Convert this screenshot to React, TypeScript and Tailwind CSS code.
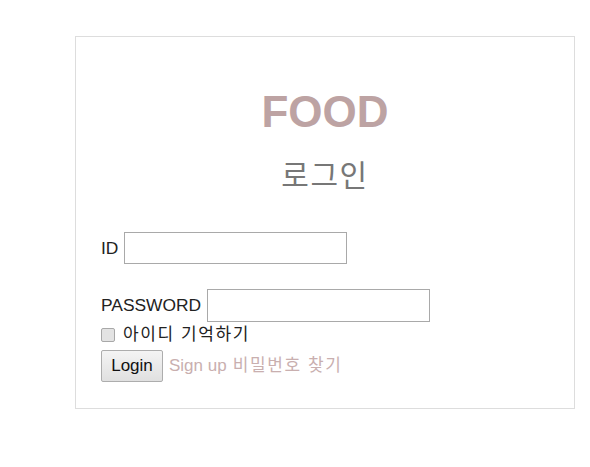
import { useState } from "react";

const App = () => {
  const [id, setId] = useState("");
  const [password, setPassword] = useState("");
  const [remember, setRemember] = useState(false);

  return (
    <div className="min-h-screen bg-white font-['Liberation_Sans','Noto_Sans_CJK_KR',sans-serif] pt-[36px] pl-[75px]">
      <div className="w-[500px] h-[373px] border border-[#dddddd] px-[25px]">
        {/* Title */}
        <h1 className="mt-[50px] text-center text-[44px] leading-[50px] font-bold text-[#bda3a3]">
          FOOD
        </h1>
        <h2 className="mt-[19px] text-center text-[30px] leading-[40px] tracking-[1.5px] text-[#777777]">
          로그인
        </h2>

        {/* ID */}
        <div className="mt-[36px] flex items-center gap-[6px] h-[32px] text-[17.4px] text-[#222222]">
          <span>ID</span>
          <input
            type="text"
            value={id}
            onChange={(e) => setId(e.target.value)}
            className="w-[223px] h-[32px] border border-[#a9a9a9] bg-white px-1 outline-none"
          />
        </div>

        {/* Password */}
        <div className="mt-[25px] flex items-center gap-[6px] h-[33px] text-[17.4px] text-[#222222]">
          <span>PASSWORD</span>
          <input
            type="password"
            value={password}
            onChange={(e) => setPassword(e.target.value)}
            className="w-[223px] h-[33px] border border-[#a9a9a9] bg-white px-1 outline-none"
          />
        </div>

        {/* Remember */}
        <label className="mt-[1px] flex items-center gap-[8px] h-[23px] text-[17px] text-[#222222]">
          <input
            type="checkbox"
            checked={remember}
            onChange={() => setRemember(!remember)}
            className="appearance-none w-[14px] h-[14px] m-0 border border-[#a8a8a8] rounded-[2px] bg-[#e3e3e3] checked:bg-[#8a8a8a]"
          />
          <span className="tracking-[1.6px]">아이디 기억하기</span>
        </label>

        {/* Actions */}
        <div className="mt-[4px] flex items-center text-[17px]">
          <button
            type="button"
            className="h-[32px] w-[62px] border border-[#adadad] rounded-[2px] bg-gradient-to-b from-[#f4f4f4] to-[#e0e0e0] text-[#111111]"
          >
            Login
          </button>
          <a href="#" className="ml-[6px] text-[#c9afaf]">
            Sign up
          </a>
          <a href="#" className="ml-[6px] tracking-[1.6px] text-[#c9afaf]">
            비밀번호 찾기
          </a>
        </div>
      </div>
    </div>
  );
};

export default App;
